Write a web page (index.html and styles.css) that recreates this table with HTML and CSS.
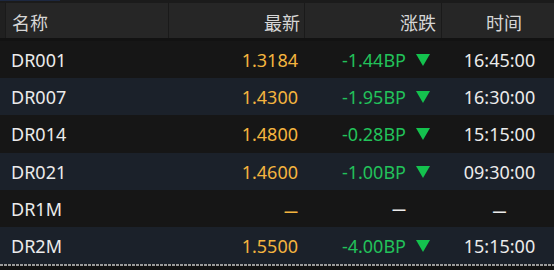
FILE: index.html
```html
<!DOCTYPE html>
<html lang="zh">
<head>
<meta charset="utf-8">
<link rel="stylesheet" href="styles.css">
</head>
<body>
<div class="topbar"><div class="topbar-accent"></div></div>
<div class="head">
  <div class="hcell gutter"></div>
  <div class="hcell left">名称</div>
  <div class="hcell right">最新</div>
  <div class="hcell right chg-h">涨跌</div>
  <div class="hcell center time-h">时间</div>
</div>
<div class="rows">
  <div class="row odd">
    <div class="name">DR001</div><div class="price">1.3184</div>
    <div class="chg"><span>-1.44BP</span><svg class="tri" viewBox="0 0 14 12"><polygon points="0,0 14,0 7,12"/></svg></div>
    <div class="time">16:45:00</div>
  </div>
  <div class="row even">
    <div class="name">DR007</div><div class="price">1.4300</div>
    <div class="chg"><span>-1.95BP</span><svg class="tri" viewBox="0 0 14 12"><polygon points="0,0 14,0 7,12"/></svg></div>
    <div class="time">16:30:00</div>
  </div>
  <div class="row odd">
    <div class="name">DR014</div><div class="price">1.4800</div>
    <div class="chg"><span>-0.28BP</span><svg class="tri" viewBox="0 0 14 12"><polygon points="0,0 14,0 7,12"/></svg></div>
    <div class="time">15:15:00</div>
  </div>
  <div class="row even">
    <div class="name">DR021</div><div class="price">1.4600</div>
    <div class="chg"><span>-1.00BP</span><svg class="tri" viewBox="0 0 14 12"><polygon points="0,0 14,0 7,12"/></svg></div>
    <div class="time">09:30:00</div>
  </div>
  <div class="row odd">
    <div class="name">DR1M</div><div class="price"><span class="dash">—</span></div>
    <div class="chg"><span class="dash white">—</span><span class="tri-slot"></span></div>
    <div class="time"><span class="dash white">—</span></div>
  </div>
  <div class="row even">
    <div class="name">DR2M</div><div class="price">1.5500</div>
    <div class="chg"><span>-4.00BP</span><svg class="tri" viewBox="0 0 14 12"><polygon points="0,0 14,0 7,12"/></svg></div>
    <div class="time">15:15:00</div>
  </div>
</div>
<div class="dashed"></div>
</body>
</html>
```
FILE: styles.css
```css
html, body {
  margin: 0;
  padding: 0;
}
body {
  width: 554px;
  height: 270px;
  overflow: hidden;
  background: #121212;
  font-family: "Noto Sans", "Noto Sans CJK SC", sans-serif;
  font-size: 18px;
  color: #e8e8e8;
}
.topbar {
  height: 3px;
  background: #1b1b1b;
}
.topbar-accent {
  width: 60px;
  height: 1px;
  background: #1d2840;
}
.head {
  display: grid;
  grid-template-columns: 5px 162px 135px 136px 116px;
  height: 35px;
  margin-bottom: 3px;
  background: #1a1a1a;
  column-gap: 1px;
}
.hcell {
  background: #262626;
  display: flex;
  align-items: center;
  padding-top: 2px;
  color: #d6d6d6;
  font-size: 18px;
}
.gutter { background: #202020; }
.hcell.left { padding-left: 6px; }
.hcell.right { justify-content: flex-end; padding-right: 4px; }
.hcell.chg-h { padding-right: 5px; }
.hcell.center { justify-content: center; padding-left: 8px; }
.rows {
  display: flex;
  flex-direction: column;
}
.row {
  display: grid;
  grid-template-columns: 168px 132px 138px 116px;
  height: 37.2px;
  align-items: center;
  padding-top: 1px;
  box-sizing: border-box;
}
.row.odd { background: #161616; }
.row.even { background: #1b212a; }
.name {
  padding-left: 11px;
  color: #ebebeb;
}
.price {
  text-align: right;
  color: #f4b43f;
  padding-right: 2px;
}
.chg {
  display: flex;
  justify-content: flex-end;
  align-items: center;
  gap: 10px;
  padding-right: 8px;
  color: #22c25a;
}
.tri {
  width: 14px;
  height: 12px;
  fill: #14c24e;
}
.tri-slot {
  width: 14px;
  height: 12px;
}
.time {
  text-align: center;
  padding-left: 7px;
  color: #ebebeb;
}
.dash {
  font-size: 14px;
  font-weight: bold;
}
.dash.white { color: #ebebeb; }
.dashed {
  height: 2px;
  background: repeating-linear-gradient(90deg, #9a9a9a 0 3px, transparent 3px 4px);
}
```
